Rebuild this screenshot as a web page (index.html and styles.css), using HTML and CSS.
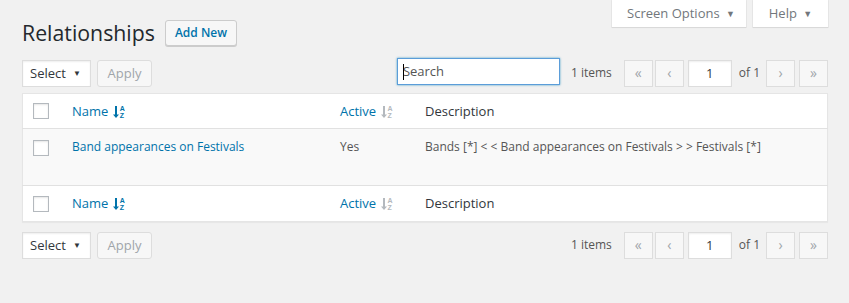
FILE: index.html
```
<!DOCTYPE html>
<html>
<head>
<meta charset="utf-8">
<title>Relationships</title>
<link rel="stylesheet" href="styles.css">
</head>
<body>
<div class="wrap">
    <div class="head">
        <div class="title-row">
            <h1>Relationships</h1>
            <a class="btn add-new" href="javascript:;">Add New</a>
        </div>
        <div class="meta-tabs">
            <a class="tab tab-options" href="javascript:;">Screen Options <span class="tri">&#9660;</span></a>
            <a class="tab tab-help" href="javascript:;">Help <span class="tri">&#9660;</span></a>
        </div>
    </div>

    <div class="tablenav">
        <div class="actions">
            <div class="select">Select <span class="caret-down">&#9660;</span></div>
            <span class="btn disabled">Apply</span>
        </div>
        <div class="nav-right">
            <div class="search"><span class="cursor"></span>Search</div>
            <span class="count">1 items</span>
            <span class="pbtn pbtn-first">&laquo;</span>
            <span class="pbtn pbtn-prev">&lsaquo;</span>
            <span class="page-box">1</span>
            <span class="of">of 1</span>
            <span class="pbtn pbtn-next">&rsaquo;</span>
            <span class="pbtn pbtn-last">&raquo;</span>
        </div>
    </div>

    <table class="list">
        <thead>
            <tr>
                <td class="col-cb"><span class="cb"></span></td>
                <th class="col-name"><a href="javascript:;">Name <span class="sort on"><svg width="6" height="14" viewBox="0 0 6 14"><path d="M2 1h2v8.5h2L3 13 0 9.5h2z"/></svg><span class="az"><i>A</i><i>Z</i></span></span></a></th>
                <th class="col-active"><a href="javascript:;">Active <span class="sort"><svg width="6" height="14" viewBox="0 0 6 14"><path d="M2 1h2v8.5h2L3 13 0 9.5h2z"/></svg><span class="az"><i>A</i><i>Z</i></span></span></a></th>
                <th class="col-desc">Description</th>
            </tr>
        </thead>
        <tbody>
            <tr>
                <td class="col-cb"><span class="cb"></span></td>
                <td class="col-name"><a href="javascript:;">Band appearances on Festivals</a></td>
                <td class="col-active">Yes</td>
                <td class="col-desc">Bands [*] &lt; &lt; Band appearances on Festivals &gt; &gt; Festivals [*]</td>
            </tr>
        </tbody>
        <tfoot>
            <tr>
                <td class="col-cb"><span class="cb"></span></td>
                <th class="col-name"><a href="javascript:;">Name <span class="sort on"><svg width="6" height="14" viewBox="0 0 6 14"><path d="M2 1h2v8.5h2L3 13 0 9.5h2z"/></svg><span class="az"><i>A</i><i>Z</i></span></span></a></th>
                <th class="col-active"><a href="javascript:;">Active <span class="sort"><svg width="6" height="14" viewBox="0 0 6 14"><path d="M2 1h2v8.5h2L3 13 0 9.5h2z"/></svg><span class="az"><i>A</i><i>Z</i></span></span></a></th>
                <th class="col-desc">Description</th>
            </tr>
        </tfoot>
    </table>

    <div class="tablenav bottom">
        <div class="actions">
            <div class="select">Select <span class="caret-down">&#9660;</span></div>
            <span class="btn disabled">Apply</span>
        </div>
        <div class="nav-right">
            <span class="count">1 items</span>
            <span class="pbtn pbtn-first">&laquo;</span>
            <span class="pbtn pbtn-prev">&lsaquo;</span>
            <span class="page-box">1</span>
            <span class="of">of 1</span>
            <span class="pbtn pbtn-next">&rsaquo;</span>
            <span class="pbtn pbtn-last">&raquo;</span>
        </div>
    </div>
</div>
</body>
</html>
```

FILE: styles.css
```
body,div,h1,table,td,th{margin:0;padding:0;}
body{background:#f1f1f1;color:#444;font:12px/1.4 "Segoe UI","Open Sans",Arial,sans-serif;}
a{color:#0073aa;text-decoration:none;}

.wrap{width:806px;margin-left:22px;}

/* header + screen meta tabs */
.head{display:flex;justify-content:space-between;align-items:flex-start;}
.title-row{display:flex;align-items:center;padding-top:20px;}
.title-row h1{font-size:21.3px;font-weight:400;color:#23282d;line-height:26px;margin-right:10px;}
.meta-tabs{display:flex;gap:7px;}
.tab{display:block;box-sizing:border-box;height:27px;line-height:26px;background:#fff;color:#72777c;font-size:13px;text-align:center;box-shadow:0 0 0 1px rgba(0,0,0,.04),0 1px 1px rgba(0,0,0,.06);}
.tab-options{width:134px;padding-left:4px;}
.tab-help{width:75px;}
.tab .tri{font-size:9px;margin-left:3px;vertical-align:1px;}

.btn{display:inline-block;box-sizing:border-box;height:26px;line-height:24px;padding:0 9px;border:1px solid #ccc;border-radius:3px;background:#f7f7f7;box-shadow:0 1px 0 #ccc;}
.add-new{font-weight:600;color:#0073aa;font-size:12px;}
.btn.disabled{color:#a0a5aa;border-color:#ddd;background:#f7f7f7;box-shadow:none;height:27px;line-height:25px;width:55px;text-align:center;padding:0;font-size:13px;}

/* table nav */
.tablenav{display:flex;align-items:center;justify-content:space-between;margin-top:14px;height:27px;font-size:13px;}
.tablenav.bottom{margin-top:10px;}
.actions{display:flex;gap:6px;align-items:center;}
.select{box-sizing:border-box;width:69px;height:27px;line-height:25px;padding-left:7px;background:#fff;border:1px solid #ddd;box-shadow:inset 0 1px 2px rgba(0,0,0,.07);color:#32373c;position:relative;}
.caret-down{position:absolute;right:9px;top:-1px;font-size:8px;color:#32373c;}
.nav-right{display:flex;align-items:center;}
.search{box-sizing:border-box;width:163px;height:27px;line-height:25px;padding-left:5px;border:1px solid #5b9dd9;box-shadow:0 0 2px rgba(30,140,190,.8);background:#fff;color:#555;margin-right:11px;margin-top:-4px;position:relative;font-size:13px;}
.cursor{position:absolute;left:5px;top:5px;width:1px;height:16px;background:#000;}
.count{color:#555;margin-right:12px;font-size:12px;}
.pbtn{box-sizing:border-box;display:inline-block;width:29px;height:27px;line-height:24px;text-align:center;border:1px solid #ddd;background:#f7f7f7;color:#a0a5aa;font-size:14px;margin-right:2px;}
.pbtn-prev{margin-right:4px;}
.pbtn-next{margin-right:4px;}
.pbtn-last{margin-right:0;}
.page-box{box-sizing:border-box;display:inline-block;width:44px;height:27px;line-height:25px;text-align:center;border:1px solid #ddd;background:#fff;color:#32373c;box-shadow:inset 0 1px 2px rgba(0,0,0,.07);}
.of{color:#555;margin:0 6px 0 7px;font-size:12px;}

/* list table */
.list{width:806px;margin-top:6px;border-collapse:collapse;table-layout:fixed;background:#fff;border:1px solid #e5e5e5;box-shadow:0 1px 1px rgba(0,0,0,.04);}
.list th,.list td{text-align:left;font-weight:400;vertical-align:middle;}
.list thead tr{height:35px;border-bottom:1px solid #e1e1e1;}
.list tfoot tr{height:36px;border-top:1px solid #e1e1e1;}
.list thead th,.list tfoot th{color:#32373c;font-size:13px;}
.list tbody tr{height:57px;background:#f9f9f9;}
.list tbody td{vertical-align:top;padding-top:10px;color:#555;}
.list tbody .col-cb{padding-top:11px;}
.col-cb{width:29px;padding-left:10px !important;}
.col-name{width:258px;padding-left:10px !important;}
.col-active{width:75px;padding-left:10px !important;}
.col-desc{padding-left:10px !important;}
.cb{display:block;box-sizing:border-box;width:16px;height:16px;border:1px solid #b4b9be;background:#fff;box-shadow:inset 0 1px 2px rgba(0,0,0,.1);}

.sort{display:inline-flex;align-items:center;vertical-align:-3px;margin-left:1px;fill:#b4b9be;color:#b4b9be;}
.sort.on{fill:#0073aa;color:#0073aa;}
.az{display:flex;flex-direction:column;margin-left:1px;}
.az i{font-style:normal;font-size:7px;line-height:7px;font-weight:700;font-family:Arial,sans-serif;}
```
